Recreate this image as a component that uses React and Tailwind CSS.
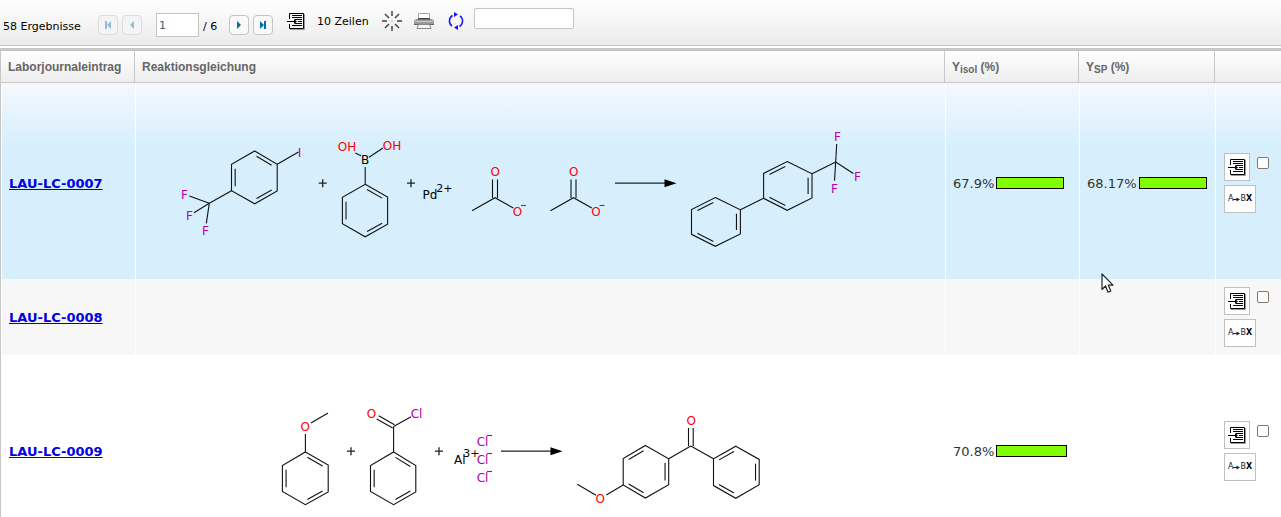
import React from "react";

const HETERO = { O: "#ff0000", F: "#b000b0", X: "#b000b0", C: "#000000" };

/* ---------- drawing primitives for reaction schemes ---------- */

function Atom({ x, y, kind = "C", size = 12, children }) {
  return (
    <text x={x} y={y + size * 0.365} fontSize={size} fill={HETERO[kind]} stroke="none" textAnchor="middle">
      {children}
    </text>
  );
}

function Bond({ a, b }) {
  return <line x1={a[0]} y1={a[1]} x2={b[0]} y2={b[1]} />;
}

/* Six-membered aromatic ring; "doubles" holds the index of each double bond's first corner. */
function Ring({ points, doubles }) {
  const cx = points.reduce((s, p) => s + p[0], 0) / 6;
  const cy = points.reduce((s, p) => s + p[1], 0) / 6;
  const inner = (p) => [cx + (p[0] - cx) * 0.84, cy + (p[1] - cy) * 0.84];
  return (
    <g>
      <polygon points={points.map((p) => p.join(",")).join(" ")} />
      {doubles.map((i) => {
        const p = inner(points[i]);
        const q = inner(points[(i + 1) % 6]);
        const dx = (q[0] - p[0]) * 0.1;
        const dy = (q[1] - p[1]) * 0.1;
        return <Bond key={i} a={[p[0] + dx, p[1] + dy]} b={[q[0] - dx, q[1] - dy]} />;
      })}
    </g>
  );
}

function Plus({ x, y }) {
  return <path d={`M${x - 4} ${y}h8M${x} ${y - 4}v8`} stroke="#222" strokeWidth="1.3" />;
}

function Arrow({ x1, x2, y }) {
  return (
    <g>
      <line x1={x1} x2={x2 - 10} y1={y} y2={y} stroke="#222" strokeWidth="1.3" />
      <path d={`M${x2 - 12} ${y - 4}L${x2} ${y}L${x2 - 12} ${y + 4}Z`} fill="#000" stroke="none" />
    </g>
  );
}

function Scheme({ label, top, children }) {
  return (
    <svg
      role="img"
      aria-label={label}
      width="754"
      height="190"
      viewBox={`143 ${top} 754 190`}
      className="block shrink-0 font-['DejaVu_Sans',sans-serif]"
      fill="none"
      stroke="#111"
      strokeWidth="1.1"
    >
      {children}
    </svg>
  );
}

function Acetate({ dx }) {
  return (
    <g transform={`translate(${dx} 0)`}>
      <Atom x={495.3} y={171.7} kind="O">O</Atom>
      <path d="M492.5 179.5V198M497.5 179.5V198" />
      <path d="M472 210.7L495 197.7L513.3 208" />
      <Atom x={517.6} y={211.7} kind="O">O</Atom>
      <path d="M521 205.5h5" stroke={HETERO.O} />
    </g>
  );
}

function SuzukiCoupling() {
  return (
    <Scheme label="Reaktion LAU-LC-0007" top={88}>
      <Ring
        points={[[254.7, 151], [277.2, 164.2], [277.2, 191], [254.7, 203.8], [231.5, 190.7], [231.5, 164.3]]}
        doubles={[0, 2, 4]}
      />
      <Bond a={[277.2, 164.2]} b={[298.5, 152]} />
      <Atom x={299.5} y={153} kind="X">I</Atom>
      <Bond a={[231.5, 190.7]} b={[209.3, 203.3]} />
      <Bond a={[209.3, 203.3]} b={[189.3, 196]} />
      <Bond a={[209.3, 203.3]} b={[194, 212.7]} />
      <Bond a={[209.3, 203.3]} b={[206.3, 223.3]} />
      <Atom x={184.5} y={195} kind="F">F</Atom>
      <Atom x={189.5} y={216} kind="F">F</Atom>
      <Atom x={205.5} y={230.7} kind="F">F</Atom>
      <Plus x={322.7} y={183.2} />

      <Atom x={347} y={147} kind="O">OH</Atom>
      <Atom x={392} y={145.8} kind="O">OH</Atom>
      <Atom x={365} y={159.8}>B</Atom>
      <Bond a={[355.3, 153]} b={[361, 155.8]} />
      <Bond a={[369, 157.3]} b={[383, 148]} />
      <Bond a={[365.2, 167]} b={[365.2, 184.3]} />
      <Ring
        points={[[365.2, 184.3], [387.6, 197], [387.6, 224.3], [365.2, 236.8], [342.4, 223.7], [342.4, 197.3]]}
        doubles={[0, 2, 4]}
      />
      <Plus x={411} y={183.2} />

      <Atom x={430} y={194.7}>Pd</Atom>
      <Atom x={444.3} y={188.3} size={11}>2+</Atom>
      <Acetate dx={0} />
      <Acetate dx={78.5} />
      <Arrow x1={615} x2={676.5} y={183.2} />

      <Ring
        points={[[715.3, 197.5], [740.4, 209.8], [740.4, 234], [715.3, 246.3], [691.5, 234.3], [691.5, 209.5]]}
        doubles={[5, 1, 3]}
      />
      <Bond a={[740.4, 209.8]} b={[763.6, 198.3]} />
      <Ring
        points={[[787.2, 161.5], [812, 173.8], [812, 198], [787.2, 210.3], [763.6, 198.3], [763.6, 173.4]]}
        doubles={[5, 1, 3]}
      />
      <Bond a={[812, 173.8]} b={[835.7, 162]} />
      <Bond a={[835.7, 162]} b={[836.7, 144]} />
      <Bond a={[835.7, 162]} b={[853.3, 173.5]} />
      <Bond a={[835.7, 162]} b={[834.5, 180.7]} />
      <Atom x={837.5} y={136.7} kind="F">F</Atom>
      <Atom x={857.5} y={176.7} kind="F">F</Atom>
      <Atom x={834.5} y={188.7} kind="F">F</Atom>
    </Scheme>
  );
}

function FriedelCraftsAcylation() {
  return (
    <Scheme label="Reaktion LAU-LC-0009" top={356}>
      <Atom x={305.3} y={426.7} kind="O">O</Atom>
      <Bond a={[311, 423]} b={[328, 413]} />
      <Bond a={[305.4, 434]} b={[305.4, 452]} />
      <Ring
        points={[[305.4, 452], [328.2, 465], [328.2, 492], [305.4, 504.7], [282.4, 491.5], [282.4, 465.5]]}
        doubles={[0, 2, 4]}
      />
      <Plus x={351} y={451.2} />

      <Atom x={371.4} y={413.7} kind="O">O</Atom>
      <Atom x={416.5} y={413.5} kind="X">Cl</Atom>
      <Bond a={[376.7, 419]} b={[392.7, 428]} />
      <Bond a={[378.7, 415.7]} b={[394.5, 424.8]} />
      <Bond a={[393.6, 426.4]} b={[411, 416.7]} />
      <Bond a={[393.6, 426.4]} b={[393.6, 452]} />
      <Ring
        points={[[393.6, 452], [415.8, 465.5], [415.8, 492], [393.6, 504.7], [370.5, 491.5], [370.5, 465.5]]}
        doubles={[0, 2, 4]}
      />
      <Plus x={439} y={451.2} />

      <Atom x={459.7} y={459.7}>Al</Atom>
      <Atom x={471.3} y={453} size={11}>3+</Atom>
      {[0, 18, 36].map((dy) => (
        <g key={dy}>
          <Atom x={482.5} y={441.7 + dy} kind="X">Cl</Atom>
          <path d={`M487 ${435.5 + dy}h5`} stroke={HETERO.X} />
        </g>
      ))}
      <Arrow x1={501} x2={562.5} y={451.2} />

      <path d="M577.3 484.3L596 495.3M606.3 495L623.2 485" />
      <Atom x={600.3} y={498.7} kind="O">O</Atom>
      <Ring
        points={[[645.4, 445.5], [668.7, 458.7], [668.7, 484.8], [645.4, 498], [623.2, 485], [623.2, 458.5]]}
        doubles={[5, 1, 3]}
      />
      <Bond a={[668.7, 458.7]} b={[690.8, 446]} />
      <path d="M688.5 428V446M693.2 428V446" />
      <Atom x={691.3} y={420.7} kind="O">O</Atom>
      <Bond a={[690.8, 446]} b={[713.5, 458.8]} />
      <Ring
        points={[[735.8, 446.2], [759.2, 459.4], [759.2, 484.8], [735.8, 498.3], [713.5, 485.6], [713.5, 458.8]]}
        doubles={[5, 1, 3]}
      />
    </Scheme>
  );
}

/* ---------- icons ---------- */

function EntryIcon() {
  return (
    <svg width="18" height="17" viewBox="0 0 18 17" fill="none" stroke="#000" aria-hidden="true" className="block shrink-0">
      <path d="M2.5 6V.5H16.5V15.5H2.5V11" />
      <path d="M17.5 1V16.5H3" stroke="#999" />
      <path d="M5 2.5H15M5 4.5H15M8 6.5H15M11 8.5H15M8 10.5H15M5 12.5H15" />
      <path d="M0 8.5H9" />
      <path d="M7 6L10 8.500L7 11Z" fill="#000" stroke="none" />
    </svg>
  );
}

function BurstIcon() {
  return (
    <svg width="20" height="20" viewBox="0 0 20 20" fill="none" stroke="#444" strokeWidth="1.5" aria-hidden="true" className="block">
      <path d="M10 0V5M10 15V20M0 10H5M15 10H20" />
      <path d="M3 3L7 7M17 3L13 7M3 17L7 13M17 17L13 13" />
      <path d="M9.5 10H10.5" stroke="#999" />
    </svg>
  );
}

function PrinterIcon() {
  return (
    <svg width="20" height="17" viewBox="0 0 20 17" aria-hidden="true" className="block">
      <path d="M4.5 6V.5H15.5V6" fill="#fff" stroke="#aaa" />
      <path d="M2 6H18L20 8V12H0V8Z" fill="#999" />
      <path d="M4 5H16V6.500H4Z" fill="#444" />
      <path d="M1 8.5H19" stroke="#ccc" />
      <path d="M0 11.5H20" stroke="#666" />
      <path d="M4.5 11.5H15.5L17 15.5H3Z" fill="#f8f8f8" stroke="#888" />
    </svg>
  );
}

function RefreshIcon() {
  return (
    <svg width="16" height="18" viewBox="0 0 16 18" fill="none" stroke="#1414ff" strokeWidth="1.5" aria-hidden="true" className="block">
      <path d="M4.500 3.500A6.500 6.500 0 0 0 4 14.200" />
      <path d="M11.500 14.500A6.500 6.500 0 0 0 12 3.800" />
      <path d="M6 0V5L10 2.500Z" fill="#1414ff" stroke="none" />
      <path d="M10 13V18L6 15.500Z" fill="#1414ff" stroke="none" />
    </svg>
  );
}

const PAGER_PATHS = {
  first: "M1 0H3V8H1ZM7 0V8L3 4Z",
  previous: "M6 0V8L2 4Z",
  next: "M2 0V8L6 4Z",
  last: "M1 0V8L5 4ZM5 0H7V8H5Z",
};

function PagerButton({ kind, label, disabled }) {
  return (
    <button
      type="button"
      aria-label={label}
      disabled={disabled}
      className={
        disabled
          ? "flex size-5 items-center justify-center rounded-sm border border-[#dcdcdc] bg-[#f4f4f4] text-[#8fbfd2]"
          : "flex size-5 items-center justify-center rounded-sm border border-[#c4c4c4] bg-[#fafafa] text-[#0073a3]"
      }
    >
      <svg width="8" height="8" viewBox="0 0 8 8" fill="currentColor" aria-hidden="true">
        <path d={PAGER_PATHS[kind]} />
      </svg>
    </button>
  );
}

/* ---------- table cells ---------- */

function Yield({ value }) {
  if (value == null) return null;
  return (
    <div className="flex items-center gap-0.5">
      <span className="pt-0.5">{value}%</span>
      <span className="block h-3 border border-black bg-[#80ff00]" style={{ width: Math.round(value) }} />
    </div>
  );
}

function Actions({ id }) {
  return (
    <div className="flex flex-col gap-1 pl-px">
      <div className="flex items-start gap-[7px]">
        <button
          type="button"
          aria-label={`${id} öffnen`}
          className="flex h-7 w-[26px] items-center justify-center border border-[#c0c0c0] bg-white"
        >
          <EntryIcon />
        </button>
        <input
          type="checkbox"
          aria-label={`${id} auswählen`}
          className="mt-1 size-3 appearance-none rounded-xs border border-[#85786a] bg-white checked:bg-[#85786a]"
        />
      </div>
      <button
        type="button"
        className="flex h-7 w-8 items-center justify-center border border-[#c0c0c0] bg-white text-[8px] leading-none text-[#222]"
      >
        A
        <svg width="7" height="5" viewBox="0 0 7 5" aria-hidden="true">
          <path d="M0 2.5H5" stroke="#222" />
          <path d="M3.5 .5L7 2.5L3.5 4.5Z" fill="#222" />
        </svg>
        B<b className="text-black">X</b>
      </button>
    </div>
  );
}

function Pointer() {
  return (
    <svg
      width="14"
      height="21"
      viewBox="0 0 14 21"
      aria-hidden="true"
      className="pointer-events-none absolute top-[186px] left-[21px] z-10"
    >
      <path
        d="M1 1V16.5L4.5 13L7 19.3L9.8 18L7.3 12.2H12Z"
        fill="#fff"
        stroke="#222"
        strokeWidth="1.2"
        strokeLinejoin="round"
      />
    </svg>
  );
}

const ROWS = [
  {
    id: "LAU-LC-0007",
    scheme: <SuzukiCoupling />,
    isolated: 67.9,
    spectroscopic: 68.17,
    pointer: true,
    cell: "h-[196px] border-t-4 border-t-[#f7f7f7] bg-linear-to-b from-[#f2f8ff] to-[#d7effd] to-30%",
  },
  { id: "LAU-LC-0008", cell: "h-[76px] bg-[#f7f7f7]" },
  { id: "LAU-LC-0009", scheme: <FriedelCraftsAcylation />, isolated: 70.8, cell: "h-48 bg-white" },
];

function Th({ children, last }) {
  return (
    <th
      scope="col"
      className={
        last
          ? "h-8 border-b border-[#c8c8c8] bg-linear-to-b from-white to-[#ededed]"
          : "h-8 border-r border-b border-[#c8c8c8] bg-linear-to-b from-white to-[#ededed] px-[7px] text-left font-bold whitespace-nowrap"
      }
    >
      {children}
    </th>
  );
}

function Td({ className, children }) {
  return <td className={`relative border-l border-l-white px-[7px] py-0 align-middle ${className}`}>{children}</td>;
}

export default function App() {
  return (
    <div className="h-screen overflow-hidden bg-white font-['DejaVu_Sans',sans-serif] text-[13px] text-[#333]">
      <header className="flex h-[46px] items-start border-b border-[#c4c4c4] bg-linear-to-b from-white to-[#ebebeb] text-[11px] text-black">
        <div className="mt-[13px] flex h-6 items-center pl-[3px]">
          <span className="w-[95px] pt-1 whitespace-nowrap">58 Ergebnisse</span>
          <div className="flex gap-1">
            <PagerButton kind="first" label="Erste Seite" disabled />
            <PagerButton kind="previous" label="Vorherige Seite" disabled />
          </div>
          <input
            aria-label="Seite"
            defaultValue="1"
            className="ml-3.5 h-6 w-[43px] border border-[#c4c4c4] bg-white px-0.5 text-[#36627a] outline-none"
          />
          <span className="ml-1 w-[26px] pt-1 whitespace-nowrap">/ 6</span>
          <div className="flex gap-1">
            <PagerButton kind="next" label="Nächste Seite" />
            <PagerButton kind="last" label="Letzte Seite" />
          </div>
        </div>
        <div className="mt-2 ml-3.5 flex h-[26px] items-center">
          <button type="button" aria-label="Eintrag einfügen" className="mr-3">
            <EntryIcon />
          </button>
          <span className="w-[65px] pt-0.5 whitespace-nowrap">10 Zeilen</span>
          <button type="button" aria-label="Markierung" className="mr-3">
            <BurstIcon />
          </button>
          <button type="button" aria-label="Drucken" className="mr-3.5">
            <PrinterIcon />
          </button>
          <button type="button" aria-label="Aktualisieren" className="mr-2.5">
            <RefreshIcon />
          </button>
          <input
            type="text"
            aria-label="Suche"
            className="h-[21px] w-[100px] self-start rounded-xs border border-[#c4c4c4] bg-white px-1 outline-none"
          />
        </div>
      </header>
      <main className="mt-0.5 border-t-[3px] border-l border-t-[#c6c6c6] border-l-[#c6c6c6]">
        <table className="w-full table-fixed border-separate border-spacing-0">
          <colgroup>
            <col className="w-[134px]" />
            <col />
            <col className="w-[134px]" />
            <col className="w-[136px]" />
            <col className="w-[66px]" />
          </colgroup>
          <thead className="font-['Liberation_Sans',sans-serif] text-[12px] text-[#666]">
            <tr>
              <Th>Laborjournaleintrag</Th>
              <Th>Reaktionsgleichung</Th>
              <Th>
                Y<sub className="text-[10px]">isol</sub> (%)
              </Th>
              <Th>
                Y<sub className="text-[10px]">SP</sub> (%)
              </Th>
              <Th last />
            </tr>
          </thead>
          <tbody>
            {ROWS.map((row) => (
              <tr key={row.id}>
                <Td className={row.cell}>
                  <a href={`#${row.id}`} className="block pt-0.5 font-bold whitespace-nowrap text-[#0000e0] underline">
                    {row.id}
                  </a>
                </Td>
                <Td className={row.cell}>{row.scheme}</Td>
                <Td className={row.cell}>
                  <Yield value={row.isolated} />
                </Td>
                <Td className={row.cell}>
                  <Yield value={row.spectroscopic} />
                  {row.pointer && <Pointer />}
                </Td>
                <Td className={row.cell}>
                  <Actions id={row.id} />
                </Td>
              </tr>
            ))}
          </tbody>
        </table>
      </main>
    </div>
  );
}
